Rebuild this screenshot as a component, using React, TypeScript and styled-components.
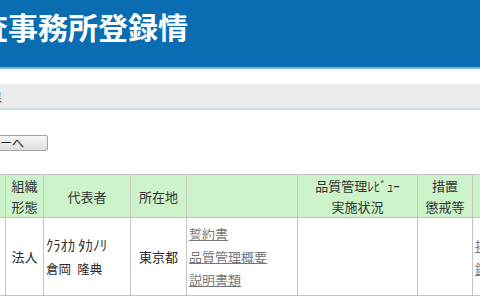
import styled, { createGlobalStyle } from 'styled-components';

const GlobalStyle = createGlobalStyle`
    html, body {
        margin: 0;
        padding: 0;
        background: #fff;
        overflow: hidden;
    }
    body {
        font-family: "Noto Sans CJK JP", "Noto Sans", sans-serif;
        color: #333;
    }
`;

interface Column {
    width: number;
    title: string[];
}

const columns: Column[] = [
    { width: 65, title: ['事務所名'] },
    { width: 38, title: ['組織', '形態'] },
    { width: 87, title: ['代表者'] },
    { width: 56, title: ['所在地'] },
    { width: 111, title: [] },
    { width: 120, title: ['品質管理ﾚﾋﾞｭｰ', '実施状況'] },
    { width: 55, title: ['措置', '懲戒等'] },
    { width: 100, title: ['備考'] },
];

const documents = ['誓約書', '品質管理概要', '説明書類'];
const publications = ['掲載情報', '鑑定書類'];

const App = () => {
    return (
        <>
            <GlobalStyle />
            {/* the page is scrolled a little to the right in the screenshot */}
            <StyledPage>
                <StyledHeader>
                    <StyledTitle>監査事務所登録情</StyledTitle>
                </StyledHeader>
                <StyledBreadcrumb>
                    <StyledBreadcrumbText>検索結果</StyledBreadcrumbText>
                </StyledBreadcrumb>
                <StyledBackButton type="button">メニューへ</StyledBackButton>
                <StyledTable>
                    <colgroup>
                        {columns.map((column, i) => (
                            <col key={i} style={{ width: column.width }} />
                        ))}
                    </colgroup>
                    <thead>
                        <tr>
                            {columns.map((column, i) => (
                                <StyledHeadCell key={i}>
                                    {column.title.map((line) => (
                                        <div key={line}>{line}</div>
                                    ))}
                                </StyledHeadCell>
                            ))}
                        </tr>
                    </thead>
                    <tbody>
                        <tr>
                            <StyledCell $align="center">名称</StyledCell>
                            <StyledCell $align="center">法人</StyledCell>
                            <StyledCell>
                                <StyledKana>ｸﾗｵｶ ﾀｶﾉﾘ</StyledKana>
                                <StyledName>倉岡{'\u2002'}隆典</StyledName>
                            </StyledCell>
                            <StyledCell $align="center">東京都</StyledCell>
                            <StyledCell>
                                <StyledLinkList>
                                    {documents.map((doc) => (
                                        <StyledLink key={doc}>{doc}</StyledLink>
                                    ))}
                                </StyledLinkList>
                            </StyledCell>
                            <StyledCell />
                            <StyledCell />
                            <StyledCell>
                                <StyledLinkList>
                                    {publications.map((doc) => (
                                        <StyledLink key={doc}>{doc}</StyledLink>
                                    ))}
                                </StyledLinkList>
                            </StyledCell>
                        </tr>
                    </tbody>
                </StyledTable>
            </StyledPage>
        </>
    );
};

const StyledPage = styled.div`
    display: flex;
    flex-direction: column;
    align-items: flex-start;
    margin-left: -60px;
    width: 700px;
`;

const StyledHeader = styled.header`
    align-self: stretch;
    height: 67px;
    background-color: #0a6db2;
    border-bottom: 2px solid #7eb0da;
`;

const StyledTitle = styled.h1`
    margin: 0;
    padding: 11px 0 0 8px;
    font-size: 30px;
    line-height: 30px;
    font-weight: 700;
    color: #fff;
    white-space: nowrap;
`;

const StyledBreadcrumb = styled.div`
    align-self: stretch;
    display: flex;
    align-items: center;
    margin-top: 15px;
    height: 24px;
    padding-left: 14px;
    background-color: #ececec;
    border-bottom: 2px solid #cadfe8;
`;

const StyledBreadcrumbText = styled.span`
    font-size: 12px;
    color: #555;
`;

const StyledBackButton = styled.button`
    margin-top: 25px;
    width: 108px;
    height: 16px;
    padding: 0;
    font-family: inherit;
    font-size: 12px;
    line-height: 14px;
    color: #222;
    background: linear-gradient(#f6f6f6, #dedede);
    border: 1px solid #a3a3a3;
    border-radius: 2px;
`;

const StyledTable = styled.table`
    margin-top: 23px;
    width: 632px;
    table-layout: fixed;
    border-collapse: collapse;
    font-size: 13px;
`;

const StyledHeadCell = styled.th`
    height: 41px;
    padding: 0;
    font-weight: 400;
    line-height: 21px;
    color: #333;
    text-align: center;
    vertical-align: middle;
    background-color: #ccf3c9;
    border: 1px solid #c4c4c4;
`;

const StyledCell = styled.td<{ $align?: 'left' | 'center' }>`
    height: 77px;
    padding: 0 2px;
    color: #2a2a2a;
    text-align: ${({ $align }) => $align ?? 'left'};
    vertical-align: middle;
    white-space: nowrap;
    border: 1px solid #c4c4c4;
`;

const StyledKana = styled.div`
    font-size: 14.5px;
    line-height: 24px;
`;

const StyledName = styled.div`
    font-size: 12.5px;
    line-height: 24px;
`;

const StyledLinkList = styled.div`
    display: flex;
    flex-direction: column;
    line-height: 23px;
`;

const StyledLink = styled.a`
    color: #777;
    text-decoration: underline;
    cursor: pointer;
`;

export default App;
